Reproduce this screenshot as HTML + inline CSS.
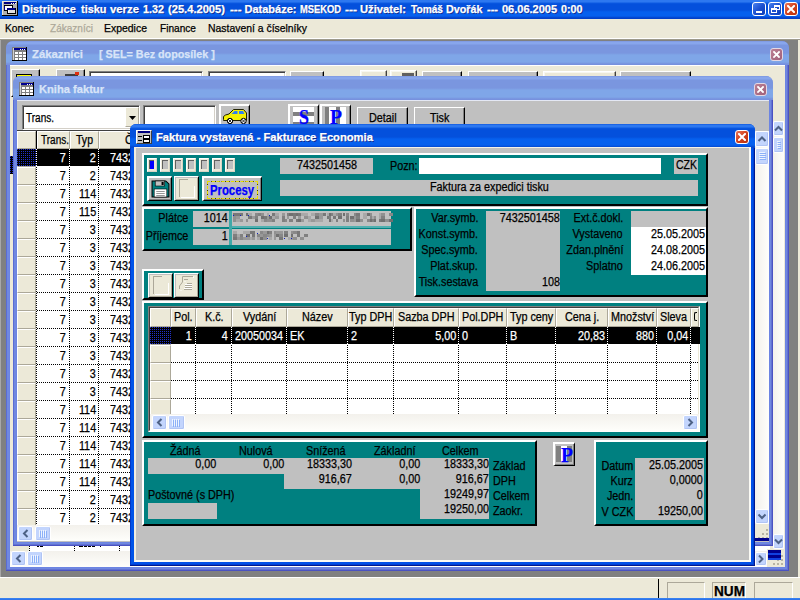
<!DOCTYPE html><html><head><meta charset="utf-8"><title>Distribuce tisku</title><style>
html,body{margin:0;padding:0;background:#808080;}
body{width:800px;height:600px;overflow:hidden;position:relative;font-family:"Liberation Sans",sans-serif;font-size:12px;color:#000;}
div,span,svg{position:absolute;box-sizing:border-box;}
span{white-space:nowrap;-webkit-text-stroke:0.25px currentColor;}
.panel{background:#008080;border-top:2px solid #fff;border-left:2px solid #fff;border-right:2px solid #000;border-bottom:2px solid #000;}
.btn{background:#ece9d8;border-top:1px solid #fff;border-left:1px solid #fff;border-right:1px solid #404040;border-bottom:1px solid #404040;box-shadow:inset -1px -1px 0 #aca899, inset 1px 1px 0 #f8f7f0;}
.gbtn{background:#c0c0c0;border-top:2px solid #fff;border-left:2px solid #fff;border-right:1px solid #000;border-bottom:1px solid #000;box-shadow:inset -1px -1px 0 #808080;}
.gbtn1{background:#c0c0c0;border-top:1px solid #fff;border-left:1px solid #fff;border-right:1px solid #000;border-bottom:1px solid #000;box-shadow:inset -1px -1px 0 #808080;}
.pbtn{background:#ece9d8;border-top:1px solid #fff;border-left:1px solid #fff;border-right:1px solid #000;border-bottom:1px solid #000;box-shadow:inset 1px 1px 0 #c0c0c0,inset -1px -1px 0 #aca899;}
.hd{background:#ece9d8;border-top:1px solid #fff;border-left:1px solid #fff;border-right:1px solid #aca899;border-bottom:1px solid #aca899;}
.sb{background:#c3d5fd;border:1px solid #fff;border-radius:2px;box-shadow:inset -1px -1px 0 #b0c4f4;}
.cb{border:1px solid #fff;border-radius:3px;}
.cbi{border:1px solid #e4d8e4;border-radius:3px;}
.sunk{background:#fff;border:1px solid #808080;border-right-color:#fff;border-bottom-color:#fff;box-shadow:inset 1px 1px 0 #404040,inset -1px -1px 0 #d4d0c8;}
</style></head><body>
<div style="left:0px;top:0px;width:800px;height:19px;background:linear-gradient(to bottom,#2d78f0 0,#2d78f0 2px,#0c5ae2 3px,#0450dc 4px,#0450dc 10px,#0660ee 12px,#0660ee 16px,#0340c8 18px,#0340c8 19px);"></div>
<svg style="left:2px;top:1px" width="16" height="15" viewBox="0 0 16 15" shape-rendering="crispEdges"><rect width="16" height="15" fill="#000"/><rect width="15" height="14" fill="#e8e4d8"/><rect x="1" y="1" width="14" height="13" fill="#b0b0b0"/><rect x="2" y="1" width="12" height="2" fill="#000080"/><rect x="9" y="2" width="1" height="1" fill="#fff"/><rect x="11" y="2" width="1" height="1" fill="#fff"/><rect x="13" y="2" width="1" height="1" fill="#fff"/><rect x="2" y="4" width="9" height="6" fill="#000"/><rect x="2" y="5" width="1" height="4" fill="#000080"/><rect x="3" y="5" width="7" height="4" fill="#fff"/><rect x="5" y="7" width="9" height="6" fill="#000"/><rect x="5" y="7" width="8" height="2" fill="#000080"/><rect x="6" y="9" width="7" height="3" fill="#e0e0e0"/><rect x="6" y="9" width="1" height="3" fill="#fff"/></svg>
<span style="top:3px;font-size:11px;line-height:13px;font-weight:bold;color:#fff;left:22px;transform-origin:0 0;text-shadow:1px 1px 0 #0a2a90;">Distribuce</span>
<span style="top:3px;font-size:11px;line-height:13px;font-weight:bold;color:#fff;left:80.5px;transform-origin:0 0;transform:scaleX(0.9927);text-shadow:1px 1px 0 #0a2a90;">tisku</span>
<span style="top:3px;font-size:11px;line-height:13px;font-weight:bold;color:#fff;left:110px;transform-origin:0 0;transform:scaleX(1.0300);text-shadow:1px 1px 0 #0a2a90;">verze</span>
<span style="top:3px;font-size:11px;line-height:13px;font-weight:bold;color:#fff;left:143px;transform-origin:0 0;transform:scaleX(0.9796);text-shadow:1px 1px 0 #0a2a90;">1.32</span>
<span style="top:3px;font-size:11px;line-height:13px;font-weight:bold;color:#fff;left:168px;transform-origin:0 0;transform:scaleX(1.0122);text-shadow:1px 1px 0 #0a2a90;">(25.4.2005)</span>
<span style="top:3px;font-size:11px;line-height:13px;font-weight:bold;color:#fff;left:229.5px;transform-origin:0 0;transform:scaleX(1.0484);text-shadow:1px 1px 0 #0a2a90;">---</span>
<span style="top:3px;font-size:11px;line-height:13px;font-weight:bold;color:#fff;left:244.5px;transform-origin:0 0;text-shadow:1px 1px 0 #0a2a90;">Databáze:</span>
<span style="top:3px;font-size:11px;line-height:13px;font-weight:bold;color:#fff;left:300px;transform-origin:0 0;transform:scaleX(0.8492);text-shadow:1px 1px 0 #0a2a90;">MSEKOD</span>
<span style="top:3px;font-size:11px;line-height:13px;font-weight:bold;color:#fff;left:345px;transform-origin:0 0;transform:scaleX(1.0940);text-shadow:1px 1px 0 #0a2a90;">---</span>
<span style="top:3px;font-size:11px;line-height:13px;font-weight:bold;color:#fff;left:360px;transform-origin:0 0;transform:scaleX(1.0166);text-shadow:1px 1px 0 #0a2a90;">Uživatel:</span>
<span style="top:3px;font-size:11px;line-height:13px;font-weight:bold;color:#fff;left:410.5px;transform-origin:0 0;transform:scaleX(0.9234);text-shadow:1px 1px 0 #0a2a90;">Tomáš</span>
<span style="top:3px;font-size:11px;line-height:13px;font-weight:bold;color:#fff;left:446px;transform-origin:0 0;transform:scaleX(0.9782);text-shadow:1px 1px 0 #0a2a90;">Dvořák</span>
<span style="top:3px;font-size:11px;line-height:13px;font-weight:bold;color:#fff;left:487px;transform-origin:0 0;text-shadow:1px 1px 0 #0a2a90;">---</span>
<span style="top:3px;font-size:11px;line-height:13px;font-weight:bold;color:#fff;left:502px;transform-origin:0 0;text-shadow:1px 1px 0 #0a2a90;">06.06.2005</span>
<span style="top:3px;font-size:11px;line-height:13px;font-weight:bold;color:#fff;left:561px;transform-origin:0 0;transform:scaleX(0.9759);text-shadow:1px 1px 0 #0a2a90;">0:00</span>
<div class="cb" style="left:752px;top:2px;width:14px;height:14px;background:linear-gradient(135deg,#4a83f0,#1c50d0 50%,#0a3cb8);"></div>
<div class="cb" style="left:768px;top:2px;width:14px;height:14px;background:linear-gradient(135deg,#4a83f0,#1c50d0 50%,#0a3cb8);"></div>
<div class="cb" style="left:784px;top:2px;width:14px;height:14px;background:linear-gradient(135deg,#e8765a,#d2401c 50%,#b8300e);"></div>
<div style="left:756px;top:11px;width:6px;height:2px;background:#fff;"></div>
<div style="left:774px;top:5px;width:6px;height:5px;border:1px solid #fff;border-top-width:2px;"></div>
<div style="left:771px;top:8px;width:6px;height:5px;border:1px solid #fff;border-top-width:2px;background:#1c50d0;"></div>
<svg style="left:787px;top:5px" width="8" height="8" viewBox="0 0 8 8"><path d="M1 1L7 7M7 1L1 7" stroke="#fff" stroke-width="2" stroke-linecap="square"/></svg>
<div style="left:0px;top:19px;width:800px;height:19px;background:#ece9d8;"></div>
<span style="top:22px;font-size:11px;line-height:13px;left:5px;transform-origin:0 0;transform:scaleX(0.9289);">Konec</span>
<span style="top:22px;font-size:11px;line-height:13px;color:#aca899;left:50px;transform-origin:0 0;transform:scaleX(0.9131);">Zákazníci</span>
<span style="top:22px;font-size:11px;line-height:13px;left:104px;transform-origin:0 0;transform:scaleX(0.9496);">Expedice</span>
<span style="top:22px;font-size:11px;line-height:13px;left:160px;transform-origin:0 0;transform:scaleX(0.9194);">Finance</span>
<span style="top:22px;font-size:11px;line-height:13px;left:208px;transform-origin:0 0;transform:scaleX(0.9462);">Nastavení a číselníky</span>
<div style="left:0px;top:38px;width:800px;height:1px;background:#fff;"></div>
<div style="left:0px;top:39px;width:800px;height:1px;background:#9d9a8c;"></div>
<div style="left:0px;top:40px;width:800px;height:537px;background:#808080;"></div>
<div style="left:0px;top:40px;width:1px;height:537px;background:#a8a8a8;"></div>
<div style="left:798px;top:40px;width:2px;height:537px;background:#ece9d8;"></div>
<div style="left:0px;top:577px;width:800px;height:1px;background:#fff;"></div>
<div style="left:0px;top:578px;width:800px;height:22px;background:#ece9d8;"></div>
<div style="left:658px;top:579px;width:1px;height:19px;background:#000;"></div>
<div style="left:667px;top:582px;width:38px;height:17px;border:1px solid #aca899;border-right-color:#fff;border-bottom-color:#fff;"></div>
<div style="left:712px;top:582px;width:34px;height:17px;border:1px solid #aca899;border-right-color:#fff;border-bottom-color:#fff;"></div>
<div style="left:754px;top:582px;width:39px;height:17px;border:1px solid #aca899;border-right-color:#fff;border-bottom-color:#fff;"></div>
<span style="top:584px;font-size:14px;line-height:15px;font-weight:bold;left:714px;transform-origin:0 0;transform:scaleX(0.9725);">NUM</span>
<div style="left:0px;top:598px;width:800px;height:2px;background:linear-gradient(to bottom,#3a86f2,#2a6ee8);"></div>
<div style="left:6px;top:41px;width:783px;height:530px;background:#7088e0;border-radius:7px 7px 0 0;"></div>
<div style="left:785px;top:49px;width:1px;height:519px;background:#6c84e2;"></div>
<div style="left:6px;top:49px;width:1px;height:522px;background:#5a6cd2;"></div>
<div style="left:786px;top:49px;width:1px;height:520px;background:#7088e0;"></div>
<div style="left:7px;top:49px;width:1px;height:521px;background:#7088e0;"></div>
<div style="left:787px;top:49px;width:1px;height:521px;background:#6272d2;"></div>
<div style="left:8px;top:49px;width:1px;height:520px;background:#7088e0;"></div>
<div style="left:788px;top:49px;width:1px;height:522px;background:#4a52c2;"></div>
<div style="left:9px;top:49px;width:1px;height:519px;background:#6c84e2;"></div>
<div style="left:9px;top:567px;width:777px;height:1px;background:#6c84e2;"></div>
<div style="left:8px;top:568px;width:779px;height:1px;background:#7088e0;"></div>
<div style="left:7px;top:569px;width:781px;height:1px;background:#6272d2;"></div>
<div style="left:6px;top:570px;width:783px;height:1px;background:#4a52c2;"></div>
<div style="left:6px;top:41px;width:783px;height:24px;background:linear-gradient(to bottom,#7a92dc 0,#88a6ec 1px,#88a6ec 3px,#7a96df 4px,#7a96df 12px,#7fa6e8 14px,#7fa6e8 21px,#7791de 23px);border-radius:7px 7px 0 0;"></div>
<div style="left:10px;top:65px;width:775px;height:502px;background:#ece9d8;border-top:1px solid #fff;"></div>
<svg style="left:12px;top:47px" width="15" height="14" viewBox="0 0 15 14" shape-rendering="crispEdges"><rect width="15" height="14" fill="#000"/><rect width="14" height="13" fill="#808080"/><rect x="1" y="1" width="1" height="12" fill="#d0d0d0"/><rect x="2" y="1" width="12" height="2" fill="#000090"/><rect x="8" y="2" width="1" height="1" fill="#fff"/><rect x="10" y="2" width="1" height="1" fill="#fff"/><rect x="12" y="2" width="1" height="1" fill="#fff"/><rect x="3" y="5" width="3" height="2" fill="#fff"/><rect x="3" y="8" width="3" height="2" fill="#fff"/><rect x="3" y="11" width="3" height="2" fill="#fff"/><rect x="7" y="5" width="3" height="2" fill="#fff"/><rect x="7" y="8" width="3" height="2" fill="#fff"/><rect x="7" y="11" width="3" height="2" fill="#fff"/><rect x="11" y="5" width="3" height="2" fill="#fff"/><rect x="11" y="8" width="3" height="2" fill="#fff"/><rect x="11" y="11" width="3" height="2" fill="#fff"/></svg>
<span style="top:48px;font-size:11px;line-height:13px;font-weight:bold;color:#d8e4f8;left:32px;transform-origin:0 0;transform:scaleX(1.0290);">Zákazníci</span>
<span style="top:48px;font-size:11px;line-height:13px;font-weight:bold;color:#d8e4f8;left:99px;transform-origin:0 0;transform:scaleX(0.9803);">[ SEL= Bez doposílek ]</span>
<div class="cbi" style="left:770px;top:48px;width:13px;height:13px;background:linear-gradient(135deg,#bc8094,#a0607a);"></div>
<svg style="left:773px;top:51px" width="7" height="7" viewBox="0 0 7 7"><path d="M1 1L6 6M6 1L1 6" stroke="#fff" stroke-width="1.8" stroke-linecap="square"/></svg>
<div class="gbtn1" style="left:11px;top:69px;width:29px;height:28px;"></div>
<div style="left:16px;top:74px;width:16px;height:10px;background:#ffff00;border:1px solid #000;"></div>
<div class="gbtn1" style="left:56px;top:69px;width:29px;height:28px;"></div>
<div style="left:65px;top:74px;width:13px;height:8px;background:#404040;"></div>
<div style="left:75px;top:72px;width:4px;height:3px;background:#e03010;"></div>
<div class="sunk" style="left:89px;top:71px;width:114px;height:20px;"></div>
<div class="sunk" style="left:208px;top:71px;width:78px;height:20px;"></div>
<div class="gbtn1" style="left:290px;top:71px;width:34px;height:20px;"></div>
<div class="btn" style="left:360px;top:70px;width:27px;height:20px;"></div>
<div class="btn" style="left:390px;top:70px;width:27px;height:20px;"></div>
<div style="left:402px;top:73px;width:12px;height:6px;background:#606060;"></div>
<div class="gbtn1" style="left:422px;top:71px;width:40px;height:20px;"></div>
<div class="gbtn1" style="left:468px;top:71px;width:70px;height:20px;"></div>
<div class="btn" style="left:543px;top:71px;width:73px;height:20px;"></div>
<span style="top:75px;font-size:12px;line-height:13px;left:556px;transform-origin:0 0;transform:scaleX(0.9000);">Faktury</span>
<div class="gbtn1" style="left:620px;top:71px;width:71px;height:20px;"></div>
<div style="left:773px;top:121px;width:11px;height:428px;background:linear-gradient(to right,#f3f1ec,#fefefb);"></div>
<div style="left:10px;top:551px;width:758px;height:16px;background:linear-gradient(to bottom,#f3f1ec,#fefefb);"></div>
<div style="left:10px;top:546px;width:760px;height:5px;background:#fff;"></div>
<div class="sb" style="left:773px;top:121px;width:11px;height:15px;"></div>
<svg style="left:773px;top:121px" width="11" height="15" viewBox="-5.5 -7.5 11 15"><path d="M-3.5 2L0 -1.5L3.5 2" stroke="#4d6185" stroke-width="2" fill="none"/></svg>
<div class="sb" style="left:773px;top:137px;width:11px;height:16px;"></div>
<div style="left:777px;top:141px;width:3px;height:1px;background:#eef4fe;"></div>
<div style="left:778px;top:142px;width:3px;height:1px;background:#8cb0f8;"></div>
<div style="left:777px;top:143px;width:3px;height:1px;background:#eef4fe;"></div>
<div style="left:778px;top:144px;width:3px;height:1px;background:#8cb0f8;"></div>
<div style="left:777px;top:145px;width:3px;height:1px;background:#eef4fe;"></div>
<div style="left:778px;top:146px;width:3px;height:1px;background:#8cb0f8;"></div>
<div style="left:777px;top:147px;width:3px;height:1px;background:#eef4fe;"></div>
<div style="left:778px;top:148px;width:3px;height:1px;background:#8cb0f8;"></div>
<div class="sb" style="left:773px;top:534px;width:11px;height:15px;"></div>
<svg style="left:773px;top:534px" width="11" height="15" viewBox="-5.5 -7.5 11 15"><path d="M-3.5 -2L0 1.5L3.5 -2" stroke="#4d6185" stroke-width="2" fill="none"/></svg>
<div class="sb" style="left:11px;top:551px;width:15px;height:15px;"></div>
<svg style="left:11px;top:551px" width="15" height="15" viewBox="-7.5 -7.5 15 15"><path d="M2 -3.5L-1.5 0L2 3.5" stroke="#4d6185" stroke-width="2" fill="none"/></svg>
<div class="sb" style="left:27px;top:551px;width:16px;height:15px;"></div>
<div style="left:31px;top:555px;width:1px;height:7px;background:#eef4fe;"></div>
<div style="left:32px;top:556px;width:1px;height:7px;background:#8cb0f8;"></div>
<div style="left:33px;top:555px;width:1px;height:7px;background:#eef4fe;"></div>
<div style="left:34px;top:556px;width:1px;height:7px;background:#8cb0f8;"></div>
<div style="left:35px;top:555px;width:1px;height:7px;background:#eef4fe;"></div>
<div style="left:36px;top:556px;width:1px;height:7px;background:#8cb0f8;"></div>
<div style="left:37px;top:555px;width:1px;height:7px;background:#eef4fe;"></div>
<div style="left:38px;top:556px;width:1px;height:7px;background:#8cb0f8;"></div>
<div class="sb" style="left:755px;top:552px;width:12px;height:14px;"></div>
<svg style="left:755px;top:552px" width="12" height="14" viewBox="-6.0 -7.0 12 14"><path d="M-2 -3.5L1.5 0L-2 3.5" stroke="#4d6185" stroke-width="2" fill="none"/></svg>
<div style="left:767px;top:549px;width:18px;height:18px;background:#ece9d8;"></div>
<div style="left:781px;top:555px;width:2px;height:2px;background:#b8b4a4;"></div>
<div style="left:777px;top:559px;width:2px;height:2px;background:#b8b4a4;"></div>
<div style="left:781px;top:559px;width:2px;height:2px;background:#b8b4a4;"></div>
<div style="left:773px;top:563px;width:2px;height:2px;background:#b8b4a4;"></div>
<div style="left:777px;top:563px;width:2px;height:2px;background:#b8b4a4;"></div>
<div style="left:781px;top:563px;width:2px;height:2px;background:#b8b4a4;"></div>
<div style="left:768px;top:550px;width:13px;height:10px;background:repeating-linear-gradient(to bottom,#00008c 0,#00008c 3px,#1040e0 3px,#1040e0 5px);"></div>
<div style="left:10px;top:156px;width:3px;height:18px;background-color:#2030c8;background-image:linear-gradient(to right,transparent 1px,#000 1px),linear-gradient(to bottom,transparent 1px,#000 1px);background-size:2px 2px,2px 2px;"></div>
<div style="left:10px;top:546px;width:19px;height:5px;background:#ece9d8;"></div>
<div style="left:29px;top:546px;width:1px;height:5px;background-image:linear-gradient(to bottom,#000 1px,transparent 1px);background-size:1px 2px;"></div>
<div style="left:74px;top:546px;width:1px;height:5px;background-image:linear-gradient(to bottom,#000 1px,transparent 1px);background-size:1px 2px;"></div>
<div style="left:119px;top:546px;width:1px;height:5px;background-image:linear-gradient(to bottom,#000 1px,transparent 1px);background-size:1px 2px;"></div>
<div style="left:37px;top:546px;width:2px;height:1px;background:#000;"></div>
<div style="left:40px;top:546px;width:3px;height:1px;background:#000;"></div>
<div style="left:79px;top:546px;width:4px;height:1px;background:#000;"></div>
<div style="left:84px;top:546px;width:3px;height:1px;background:#000;"></div>
<div style="left:88px;top:546px;width:3px;height:1px;background:#000;"></div>
<div style="left:92px;top:546px;width:3px;height:1px;background:#000;"></div>
<div style="left:100px;top:546px;width:1px;height:1px;background:#000;"></div>
<div style="left:13px;top:76px;width:760px;height:470px;background:#7088e0;border-radius:7px 7px 0 0;"></div>
<div style="left:769px;top:84px;width:1px;height:459px;background:#6c84e2;"></div>
<div style="left:13px;top:84px;width:1px;height:462px;background:#5a6cd2;"></div>
<div style="left:770px;top:84px;width:1px;height:460px;background:#7088e0;"></div>
<div style="left:14px;top:84px;width:1px;height:461px;background:#7088e0;"></div>
<div style="left:771px;top:84px;width:1px;height:461px;background:#6272d2;"></div>
<div style="left:15px;top:84px;width:1px;height:460px;background:#7088e0;"></div>
<div style="left:772px;top:84px;width:1px;height:462px;background:#4a52c2;"></div>
<div style="left:16px;top:84px;width:1px;height:459px;background:#6c84e2;"></div>
<div style="left:16px;top:542px;width:754px;height:1px;background:#6c84e2;"></div>
<div style="left:15px;top:543px;width:756px;height:1px;background:#7088e0;"></div>
<div style="left:14px;top:544px;width:758px;height:1px;background:#6272d2;"></div>
<div style="left:13px;top:545px;width:760px;height:1px;background:#4a52c2;"></div>
<div style="left:13px;top:76px;width:760px;height:24px;background:linear-gradient(to bottom,#7a92dc 0,#88a6ec 1px,#88a6ec 3px,#7a96df 4px,#7a96df 12px,#7fa6e8 14px,#7fa6e8 21px,#7791de 23px);border-radius:7px 7px 0 0;"></div>
<div style="left:17px;top:100px;width:752px;height:442px;background:#c0c0c0;border-top:1px solid #e4e8f4;"></div>
<svg style="left:19px;top:82px" width="15" height="14" viewBox="0 0 15 14" shape-rendering="crispEdges"><rect width="15" height="14" fill="#000"/><rect width="14" height="13" fill="#808080"/><rect x="1" y="1" width="1" height="12" fill="#d0d0d0"/><rect x="2" y="1" width="12" height="2" fill="#000090"/><rect x="8" y="2" width="1" height="1" fill="#fff"/><rect x="10" y="2" width="1" height="1" fill="#fff"/><rect x="12" y="2" width="1" height="1" fill="#fff"/><rect x="3" y="5" width="3" height="2" fill="#fff"/><rect x="3" y="8" width="3" height="2" fill="#fff"/><rect x="3" y="11" width="3" height="2" fill="#fff"/><rect x="7" y="5" width="3" height="2" fill="#fff"/><rect x="7" y="8" width="3" height="2" fill="#fff"/><rect x="7" y="11" width="3" height="2" fill="#fff"/><rect x="11" y="5" width="3" height="2" fill="#fff"/><rect x="11" y="8" width="3" height="2" fill="#fff"/><rect x="11" y="11" width="3" height="2" fill="#fff"/></svg>
<span style="top:83px;font-size:11px;line-height:13px;font-weight:bold;color:#d8e4f8;left:39px;transform-origin:0 0;transform:scaleX(1.0127);">Kniha faktur</span>
<div class="cbi" style="left:754px;top:83px;width:13px;height:13px;background:linear-gradient(135deg,#bc8094,#a0607a);"></div>
<svg style="left:757px;top:86px" width="7" height="7" viewBox="0 0 7 7"><path d="M1 1L6 6M6 1L1 6" stroke="#fff" stroke-width="1.8" stroke-linecap="square"/></svg>
<div class="sunk" style="left:22px;top:105px;width:118px;height:25px;"></div>
<span style="top:112px;font-size:12px;line-height:13px;left:26px;transform-origin:0 0;transform:scaleX(0.8343);">Trans.</span>
<div style="left:125px;top:107px;width:14px;height:20px;background:#ece9d8;border:1px solid #fff;border-right-color:#aca899;border-bottom-color:#aca899;"></div>
<svg style="left:129px;top:116px" width="8" height="5"><path d="M0 0H7L3.5 4Z" fill="#000"/></svg>
<div class="sunk" style="left:143px;top:105px;width:73px;height:25px;"></div>
<div class="gbtn" style="left:219px;top:104px;width:31px;height:26px;"></div>
<svg style="left:222px;top:107px" width="27" height="18" viewBox="0 0 27 18"><path d="M1.500 12.500V9.500L3.500 8L7 7L11.500 2.500H21.500L24.500 6V13.500H1.500Z" fill="#f4f000" stroke="#202000" stroke-width="1"/><path d="M9.500 7L12.500 4H15.500V7Z M17 4H21L22.500 7H17Z" fill="#3080f0"/><circle cx="8" cy="14" r="2.700" fill="#fff" stroke="#000"/><circle cx="21.500" cy="14" r="2.700" fill="#fff" stroke="#000"/><path d="M6 12L10 16M10 12L6 16M19.500 12L23.500 16M23.500 12L19.500 16" stroke="#000" stroke-width="0.8"/></svg>
<div class="gbtn" style="left:288px;top:104px;width:31px;height:26px;"></div>
<div class="gbtn" style="left:320px;top:104px;width:31px;height:26px;"></div>
<div style="left:293px;top:107px;width:21px;height:17px;background:#fff;"></div>
<div style="left:293px;top:112px;width:21px;height:4px;background:#808080;"></div>
<div style="left:293px;top:122px;width:21px;height:3px;background:#808080;"></div>
<span style="top:106px;font-size:21px;line-height:22px;font-family:'Liberation Serif',serif;font-weight:bold;color:#0000ff;left:299px;transform-origin:0 0;transform:scaleX(0.8568);">S</span>
<div style="left:325px;top:107px;width:21px;height:17px;background:#fff;"></div>
<div style="left:325px;top:107px;width:4px;height:17px;background:#808080;"></div>
<div style="left:336px;top:107px;width:4px;height:17px;background:#808080;"></div>
<span style="top:106px;font-size:21px;line-height:22px;font-family:'Liberation Serif',serif;font-weight:bold;color:#0000ff;left:330px;transform-origin:0 0;transform:scaleX(0.9354);">P</span>
<div class="gbtn1" style="left:357px;top:107px;width:51px;height:24px;"></div>
<span style="top:112px;font-size:12px;line-height:13px;left:369px;transform-origin:0 0;transform:scaleX(0.9000);">Detail</span>
<div class="gbtn1" style="left:414px;top:107px;width:51px;height:24px;"></div>
<span style="top:112px;font-size:12px;line-height:13px;left:430px;transform-origin:0 0;transform:scaleX(0.9000);">Tisk</span>
<div style="left:17px;top:130px;width:738px;height:395px;background:#fff;"></div>
<div style="left:17px;top:130px;width:738px;height:1px;background:#404040;"></div>
<div class="hd" style="left:17px;top:131px;width:19px;height:18px;"></div>
<div class="hd" style="left:37px;top:131px;width:33px;height:18px;"></div>
<span style="top:134px;font-size:12px;line-height:13px;left:41px;transform-origin:0 0;transform:scaleX(0.8343);">Trans.</span>
<div class="hd" style="left:70px;top:131px;width:29px;height:18px;"></div>
<span style="top:134px;font-size:12px;line-height:13px;left:76px;transform-origin:0 0;transform:scaleX(0.8788);">Typ</span>
<div class="hd" style="left:99px;top:131px;width:60px;height:18px;"></div>
<div style="left:36px;top:131px;width:1px;height:18px;background:#000;"></div>
<span style="top:134px;font-size:12px;line-height:13px;left:125px;transform-origin:0 0;transform:scaleX(0.9000);">Č</span>
<div class="hd" style="left:17px;top:149px;width:19px;height:18px;"></div>
<div class="hd" style="left:17px;top:167px;width:19px;height:18px;"></div>
<div class="hd" style="left:17px;top:185px;width:19px;height:18px;"></div>
<div class="hd" style="left:17px;top:203px;width:19px;height:18px;"></div>
<div class="hd" style="left:17px;top:221px;width:19px;height:18px;"></div>
<div class="hd" style="left:17px;top:239px;width:19px;height:18px;"></div>
<div class="hd" style="left:17px;top:257px;width:19px;height:18px;"></div>
<div class="hd" style="left:17px;top:275px;width:19px;height:18px;"></div>
<div class="hd" style="left:17px;top:293px;width:19px;height:18px;"></div>
<div class="hd" style="left:17px;top:311px;width:19px;height:18px;"></div>
<div class="hd" style="left:17px;top:329px;width:19px;height:18px;"></div>
<div class="hd" style="left:17px;top:347px;width:19px;height:18px;"></div>
<div class="hd" style="left:17px;top:365px;width:19px;height:18px;"></div>
<div class="hd" style="left:17px;top:383px;width:19px;height:18px;"></div>
<div class="hd" style="left:17px;top:401px;width:19px;height:18px;"></div>
<div class="hd" style="left:17px;top:419px;width:19px;height:18px;"></div>
<div class="hd" style="left:17px;top:437px;width:19px;height:18px;"></div>
<div class="hd" style="left:17px;top:455px;width:19px;height:18px;"></div>
<div class="hd" style="left:17px;top:473px;width:19px;height:18px;"></div>
<div class="hd" style="left:17px;top:491px;width:19px;height:18px;"></div>
<div class="hd" style="left:17px;top:509px;width:19px;height:18px;"></div>
<div style="left:17px;top:149px;width:19px;height:17px;background-color:#2030c8;background-image:linear-gradient(to right,transparent 1px,#000 1px),linear-gradient(to bottom,transparent 1px,#000 1px);background-size:2px 2px,2px 2px;"></div>
<div style="left:37px;top:149px;width:100px;height:17px;background:#000;"></div>
<span style="top:152px;font-size:12px;line-height:13px;color:#fff;right:734px;transform-origin:100% 0;transform:scaleX(0.9000);">7</span>
<span style="top:152px;font-size:12px;line-height:13px;color:#fff;right:704px;transform-origin:100% 0;transform:scaleX(0.9000);">2</span>
<span style="top:152px;font-size:12px;line-height:13px;color:#fff;left:110px;transform-origin:0 0;transform:scaleX(0.9000);">7432501</span>
<div style="left:37px;top:166px;width:100px;height:1px;background-image:linear-gradient(to right,#fff 1px,transparent 1px);background-size:2px 1px;"></div>
<span style="top:170px;font-size:12px;line-height:13px;right:734px;transform-origin:100% 0;transform:scaleX(0.9000);">7</span>
<span style="top:170px;font-size:12px;line-height:13px;right:704px;transform-origin:100% 0;transform:scaleX(0.9000);">2</span>
<span style="top:170px;font-size:12px;line-height:13px;left:110px;transform-origin:0 0;transform:scaleX(0.9000);">7432501</span>
<div style="left:37px;top:184px;width:100px;height:1px;background-image:linear-gradient(to right,#000 1px,transparent 1px);background-size:2px 1px;"></div>
<span style="top:188px;font-size:12px;line-height:13px;right:734px;transform-origin:100% 0;transform:scaleX(0.9000);">7</span>
<span style="top:188px;font-size:12px;line-height:13px;right:704px;transform-origin:100% 0;transform:scaleX(0.9000);">114</span>
<span style="top:188px;font-size:12px;line-height:13px;left:110px;transform-origin:0 0;transform:scaleX(0.9000);">7432501</span>
<div style="left:37px;top:202px;width:100px;height:1px;background-image:linear-gradient(to right,#000 1px,transparent 1px);background-size:2px 1px;"></div>
<span style="top:206px;font-size:12px;line-height:13px;right:734px;transform-origin:100% 0;transform:scaleX(0.9000);">7</span>
<span style="top:206px;font-size:12px;line-height:13px;right:704px;transform-origin:100% 0;transform:scaleX(0.9000);">115</span>
<span style="top:206px;font-size:12px;line-height:13px;left:110px;transform-origin:0 0;transform:scaleX(0.9000);">7432501</span>
<div style="left:37px;top:220px;width:100px;height:1px;background-image:linear-gradient(to right,#000 1px,transparent 1px);background-size:2px 1px;"></div>
<span style="top:224px;font-size:12px;line-height:13px;right:734px;transform-origin:100% 0;transform:scaleX(0.9000);">7</span>
<span style="top:224px;font-size:12px;line-height:13px;right:704px;transform-origin:100% 0;transform:scaleX(0.9000);">3</span>
<span style="top:224px;font-size:12px;line-height:13px;left:110px;transform-origin:0 0;transform:scaleX(0.9000);">7432501</span>
<div style="left:37px;top:238px;width:100px;height:1px;background-image:linear-gradient(to right,#000 1px,transparent 1px);background-size:2px 1px;"></div>
<span style="top:242px;font-size:12px;line-height:13px;right:734px;transform-origin:100% 0;transform:scaleX(0.9000);">7</span>
<span style="top:242px;font-size:12px;line-height:13px;right:704px;transform-origin:100% 0;transform:scaleX(0.9000);">3</span>
<span style="top:242px;font-size:12px;line-height:13px;left:110px;transform-origin:0 0;transform:scaleX(0.9000);">7432501</span>
<div style="left:37px;top:256px;width:100px;height:1px;background-image:linear-gradient(to right,#000 1px,transparent 1px);background-size:2px 1px;"></div>
<span style="top:260px;font-size:12px;line-height:13px;right:734px;transform-origin:100% 0;transform:scaleX(0.9000);">7</span>
<span style="top:260px;font-size:12px;line-height:13px;right:704px;transform-origin:100% 0;transform:scaleX(0.9000);">3</span>
<span style="top:260px;font-size:12px;line-height:13px;left:110px;transform-origin:0 0;transform:scaleX(0.9000);">7432501</span>
<div style="left:37px;top:274px;width:100px;height:1px;background-image:linear-gradient(to right,#000 1px,transparent 1px);background-size:2px 1px;"></div>
<span style="top:278px;font-size:12px;line-height:13px;right:734px;transform-origin:100% 0;transform:scaleX(0.9000);">7</span>
<span style="top:278px;font-size:12px;line-height:13px;right:704px;transform-origin:100% 0;transform:scaleX(0.9000);">3</span>
<span style="top:278px;font-size:12px;line-height:13px;left:110px;transform-origin:0 0;transform:scaleX(0.9000);">7432501</span>
<div style="left:37px;top:292px;width:100px;height:1px;background-image:linear-gradient(to right,#000 1px,transparent 1px);background-size:2px 1px;"></div>
<span style="top:296px;font-size:12px;line-height:13px;right:734px;transform-origin:100% 0;transform:scaleX(0.9000);">7</span>
<span style="top:296px;font-size:12px;line-height:13px;right:704px;transform-origin:100% 0;transform:scaleX(0.9000);">3</span>
<span style="top:296px;font-size:12px;line-height:13px;left:110px;transform-origin:0 0;transform:scaleX(0.9000);">7432501</span>
<div style="left:37px;top:310px;width:100px;height:1px;background-image:linear-gradient(to right,#000 1px,transparent 1px);background-size:2px 1px;"></div>
<span style="top:314px;font-size:12px;line-height:13px;right:734px;transform-origin:100% 0;transform:scaleX(0.9000);">7</span>
<span style="top:314px;font-size:12px;line-height:13px;right:704px;transform-origin:100% 0;transform:scaleX(0.9000);">3</span>
<span style="top:314px;font-size:12px;line-height:13px;left:110px;transform-origin:0 0;transform:scaleX(0.9000);">7432501</span>
<div style="left:37px;top:328px;width:100px;height:1px;background-image:linear-gradient(to right,#000 1px,transparent 1px);background-size:2px 1px;"></div>
<span style="top:332px;font-size:12px;line-height:13px;right:734px;transform-origin:100% 0;transform:scaleX(0.9000);">7</span>
<span style="top:332px;font-size:12px;line-height:13px;right:704px;transform-origin:100% 0;transform:scaleX(0.9000);">3</span>
<span style="top:332px;font-size:12px;line-height:13px;left:110px;transform-origin:0 0;transform:scaleX(0.9000);">7432501</span>
<div style="left:37px;top:346px;width:100px;height:1px;background-image:linear-gradient(to right,#000 1px,transparent 1px);background-size:2px 1px;"></div>
<span style="top:350px;font-size:12px;line-height:13px;right:734px;transform-origin:100% 0;transform:scaleX(0.9000);">7</span>
<span style="top:350px;font-size:12px;line-height:13px;right:704px;transform-origin:100% 0;transform:scaleX(0.9000);">3</span>
<span style="top:350px;font-size:12px;line-height:13px;left:110px;transform-origin:0 0;transform:scaleX(0.9000);">7432501</span>
<div style="left:37px;top:364px;width:100px;height:1px;background-image:linear-gradient(to right,#000 1px,transparent 1px);background-size:2px 1px;"></div>
<span style="top:368px;font-size:12px;line-height:13px;right:734px;transform-origin:100% 0;transform:scaleX(0.9000);">7</span>
<span style="top:368px;font-size:12px;line-height:13px;right:704px;transform-origin:100% 0;transform:scaleX(0.9000);">3</span>
<span style="top:368px;font-size:12px;line-height:13px;left:110px;transform-origin:0 0;transform:scaleX(0.9000);">7432501</span>
<div style="left:37px;top:382px;width:100px;height:1px;background-image:linear-gradient(to right,#000 1px,transparent 1px);background-size:2px 1px;"></div>
<span style="top:386px;font-size:12px;line-height:13px;right:734px;transform-origin:100% 0;transform:scaleX(0.9000);">7</span>
<span style="top:386px;font-size:12px;line-height:13px;right:704px;transform-origin:100% 0;transform:scaleX(0.9000);">3</span>
<span style="top:386px;font-size:12px;line-height:13px;left:110px;transform-origin:0 0;transform:scaleX(0.9000);">7432501</span>
<div style="left:37px;top:400px;width:100px;height:1px;background-image:linear-gradient(to right,#000 1px,transparent 1px);background-size:2px 1px;"></div>
<span style="top:404px;font-size:12px;line-height:13px;right:734px;transform-origin:100% 0;transform:scaleX(0.9000);">7</span>
<span style="top:404px;font-size:12px;line-height:13px;right:704px;transform-origin:100% 0;transform:scaleX(0.9000);">114</span>
<span style="top:404px;font-size:12px;line-height:13px;left:110px;transform-origin:0 0;transform:scaleX(0.9000);">7432501</span>
<div style="left:37px;top:418px;width:100px;height:1px;background-image:linear-gradient(to right,#000 1px,transparent 1px);background-size:2px 1px;"></div>
<span style="top:422px;font-size:12px;line-height:13px;right:734px;transform-origin:100% 0;transform:scaleX(0.9000);">7</span>
<span style="top:422px;font-size:12px;line-height:13px;right:704px;transform-origin:100% 0;transform:scaleX(0.9000);">114</span>
<span style="top:422px;font-size:12px;line-height:13px;left:110px;transform-origin:0 0;transform:scaleX(0.9000);">7432501</span>
<div style="left:37px;top:436px;width:100px;height:1px;background-image:linear-gradient(to right,#000 1px,transparent 1px);background-size:2px 1px;"></div>
<span style="top:440px;font-size:12px;line-height:13px;right:734px;transform-origin:100% 0;transform:scaleX(0.9000);">7</span>
<span style="top:440px;font-size:12px;line-height:13px;right:704px;transform-origin:100% 0;transform:scaleX(0.9000);">114</span>
<span style="top:440px;font-size:12px;line-height:13px;left:110px;transform-origin:0 0;transform:scaleX(0.9000);">7432501</span>
<div style="left:37px;top:454px;width:100px;height:1px;background-image:linear-gradient(to right,#000 1px,transparent 1px);background-size:2px 1px;"></div>
<span style="top:458px;font-size:12px;line-height:13px;right:734px;transform-origin:100% 0;transform:scaleX(0.9000);">7</span>
<span style="top:458px;font-size:12px;line-height:13px;right:704px;transform-origin:100% 0;transform:scaleX(0.9000);">114</span>
<span style="top:458px;font-size:12px;line-height:13px;left:110px;transform-origin:0 0;transform:scaleX(0.9000);">7432501</span>
<div style="left:37px;top:472px;width:100px;height:1px;background-image:linear-gradient(to right,#000 1px,transparent 1px);background-size:2px 1px;"></div>
<span style="top:476px;font-size:12px;line-height:13px;right:734px;transform-origin:100% 0;transform:scaleX(0.9000);">7</span>
<span style="top:476px;font-size:12px;line-height:13px;right:704px;transform-origin:100% 0;transform:scaleX(0.9000);">114</span>
<span style="top:476px;font-size:12px;line-height:13px;left:110px;transform-origin:0 0;transform:scaleX(0.9000);">7432501</span>
<div style="left:37px;top:490px;width:100px;height:1px;background-image:linear-gradient(to right,#000 1px,transparent 1px);background-size:2px 1px;"></div>
<span style="top:494px;font-size:12px;line-height:13px;right:734px;transform-origin:100% 0;transform:scaleX(0.9000);">7</span>
<span style="top:494px;font-size:12px;line-height:13px;right:704px;transform-origin:100% 0;transform:scaleX(0.9000);">2</span>
<span style="top:494px;font-size:12px;line-height:13px;left:110px;transform-origin:0 0;transform:scaleX(0.9000);">7432501</span>
<div style="left:37px;top:508px;width:100px;height:1px;background-image:linear-gradient(to right,#000 1px,transparent 1px);background-size:2px 1px;"></div>
<span style="top:512px;font-size:12px;line-height:13px;right:734px;transform-origin:100% 0;transform:scaleX(0.9000);">7</span>
<span style="top:512px;font-size:12px;line-height:13px;right:704px;transform-origin:100% 0;transform:scaleX(0.9000);">2</span>
<span style="top:512px;font-size:12px;line-height:13px;left:110px;transform-origin:0 0;transform:scaleX(0.9000);">7432501</span>
<div style="left:37px;top:526px;width:100px;height:1px;background-image:linear-gradient(to right,#000 1px,transparent 1px);background-size:2px 1px;"></div>
<div style="left:36px;top:149px;width:1px;height:376px;background-image:linear-gradient(to bottom,#000 1px,transparent 1px);background-size:1px 2px;"></div>
<div style="left:36px;top:149px;width:1px;height:17px;background-image:linear-gradient(to bottom,#fff 1px,#000 1px);background-size:1px 2px;"></div>
<div style="left:69px;top:149px;width:1px;height:376px;background-image:linear-gradient(to bottom,#000 1px,transparent 1px);background-size:1px 2px;"></div>
<div style="left:69px;top:149px;width:1px;height:17px;background-image:linear-gradient(to bottom,#fff 1px,#000 1px);background-size:1px 2px;"></div>
<div style="left:98px;top:149px;width:1px;height:376px;background-image:linear-gradient(to bottom,#000 1px,transparent 1px);background-size:1px 2px;"></div>
<div style="left:98px;top:149px;width:1px;height:17px;background-image:linear-gradient(to bottom,#fff 1px,#000 1px);background-size:1px 2px;"></div>
<div style="left:17px;top:525px;width:738px;height:16px;background:linear-gradient(to bottom,#f3f1ec,#fefefb);"></div>
<div style="left:755px;top:131px;width:14px;height:393px;background:linear-gradient(to right,#f3f1ec,#fefefb);"></div>
<div class="sb" style="left:18px;top:526px;width:15px;height:15px;"></div>
<svg style="left:18px;top:526px" width="15" height="15" viewBox="-7.5 -7.5 15 15"><path d="M2 -3.5L-1.5 0L2 3.5" stroke="#4d6185" stroke-width="2" fill="none"/></svg>
<div class="sb" style="left:35px;top:526px;width:16px;height:15px;"></div>
<div style="left:39px;top:530px;width:1px;height:7px;background:#eef4fe;"></div>
<div style="left:40px;top:531px;width:1px;height:7px;background:#8cb0f8;"></div>
<div style="left:41px;top:530px;width:1px;height:7px;background:#eef4fe;"></div>
<div style="left:42px;top:531px;width:1px;height:7px;background:#8cb0f8;"></div>
<div style="left:43px;top:530px;width:1px;height:7px;background:#eef4fe;"></div>
<div style="left:44px;top:531px;width:1px;height:7px;background:#8cb0f8;"></div>
<div style="left:45px;top:530px;width:1px;height:7px;background:#eef4fe;"></div>
<div style="left:46px;top:531px;width:1px;height:7px;background:#8cb0f8;"></div>
<div class="sb" style="left:755px;top:131px;width:14px;height:16px;"></div>
<svg style="left:755px;top:131px" width="14" height="16" viewBox="-7.0 -8.0 14 16"><path d="M-3.5 2L0 -1.5L3.5 2" stroke="#4d6185" stroke-width="2" fill="none"/></svg>
<div class="sb" style="left:755px;top:148px;width:14px;height:17px;"></div>
<div style="left:759px;top:152px;width:6px;height:1px;background:#eef4fe;"></div>
<div style="left:760px;top:153px;width:6px;height:1px;background:#8cb0f8;"></div>
<div style="left:759px;top:154px;width:6px;height:1px;background:#eef4fe;"></div>
<div style="left:760px;top:155px;width:6px;height:1px;background:#8cb0f8;"></div>
<div style="left:759px;top:156px;width:6px;height:1px;background:#eef4fe;"></div>
<div style="left:760px;top:157px;width:6px;height:1px;background:#8cb0f8;"></div>
<div style="left:759px;top:158px;width:6px;height:1px;background:#eef4fe;"></div>
<div style="left:760px;top:159px;width:6px;height:1px;background:#8cb0f8;"></div>
<div class="sb" style="left:755px;top:509px;width:14px;height:15px;"></div>
<svg style="left:755px;top:509px" width="14" height="15" viewBox="-7.0 -7.5 14 15"><path d="M-3.5 -2L0 1.5L3.5 -2" stroke="#4d6185" stroke-width="2" fill="none"/></svg>
<div style="left:755px;top:524px;width:14px;height:17px;background:#ece9d8;"></div>
<div style="left:766px;top:529px;width:2px;height:2px;background:#b8b4a4;"></div>
<div style="left:762px;top:533px;width:2px;height:2px;background:#b8b4a4;"></div>
<div style="left:766px;top:533px;width:2px;height:2px;background:#b8b4a4;"></div>
<div style="left:758px;top:537px;width:2px;height:2px;background:#b8b4a4;"></div>
<div style="left:762px;top:537px;width:2px;height:2px;background:#b8b4a4;"></div>
<div style="left:766px;top:537px;width:2px;height:2px;background:#b8b4a4;"></div>
<div style="left:755px;top:538px;width:14px;height:3px;background:#00008c;"></div>
<div style="left:130px;top:124px;width:625px;height:442px;background:#0050e8;border-radius:6px 6px 0 0;"></div>
<div style="left:751px;top:132px;width:1px;height:431px;background:#0050e8;"></div>
<div style="left:130px;top:132px;width:1px;height:434px;background:#0038c8;"></div>
<div style="left:752px;top:132px;width:1px;height:432px;background:#0050e8;"></div>
<div style="left:131px;top:132px;width:1px;height:433px;background:#0054e8;"></div>
<div style="left:753px;top:132px;width:1px;height:433px;background:#0040d0;"></div>
<div style="left:132px;top:132px;width:1px;height:432px;background:#0054e8;"></div>
<div style="left:754px;top:132px;width:1px;height:434px;background:#001890;"></div>
<div style="left:133px;top:132px;width:1px;height:431px;background:#0054e8;"></div>
<div style="left:133px;top:562px;width:619px;height:1px;background:#0050e8;"></div>
<div style="left:132px;top:563px;width:621px;height:1px;background:#0050e8;"></div>
<div style="left:131px;top:564px;width:623px;height:1px;background:#0040d0;"></div>
<div style="left:130px;top:565px;width:625px;height:1px;background:#001890;"></div>
<div style="left:130px;top:124px;width:625px;height:24px;background:linear-gradient(to bottom,#0a50d8 0,#2d78f0 1px,#2d78f0 3px,#0c5ae2 4px,#0450dc 5px,#0450dc 13px,#0660ee 15px,#0660ee 21px,#0448d0 23px);border-radius:6px 6px 0 0;"></div>
<div style="left:134px;top:147px;width:617px;height:415px;background:#c0c0c0;border:1px solid #f4f2e8;border-right:2px solid #fbfaf4;border-bottom:2px solid #fbfaf4;border-left:2px solid #f0ede0;"></div>
<div style="left:136px;top:130px;width:16px;height:14px;background:#c0c0c0;border:1px solid #fff;border-right-color:#404040;border-bottom-color:#404040;"></div>
<div style="left:138px;top:131px;width:12px;height:2px;background:#000080;"></div>
<div style="left:138px;top:136px;width:4px;height:1px;background:#000;"></div>
<div style="left:143px;top:135px;width:7px;height:4px;background:#fff;border:1px solid #000;"></div>
<div style="left:138px;top:140px;width:4px;height:1px;background:#000;"></div>
<div style="left:143px;top:139px;width:7px;height:4px;background:#fff;border:1px solid #000;"></div>
<span style="top:131px;font-size:11px;line-height:13px;font-weight:bold;color:#fff;left:156px;transform-origin:0 0;transform:scaleX(1.0164);text-shadow:1px 1px 0 #0a2a90;">Faktura vystavená - Fakturace Economia</span>
<div class="cb" style="left:735px;top:130px;width:14px;height:14px;background:linear-gradient(135deg,#e8765a,#d2401c 50%,#b8300e);"></div>
<svg style="left:738px;top:133px" width="8" height="8" viewBox="0 0 8 8"><path d="M1 1L7 7M7 1L1 7" stroke="#fff" stroke-width="2" stroke-linecap="square"/></svg>
<div class="panel" style="left:142px;top:153px;width:566px;height:53px;"></div>
<div style="left:147px;top:158px;width:10px;height:14px;background:#ece9d8;border:1px solid #fff;border-right-color:#d8d4c4;border-bottom-color:#d8d4c4;"></div>
<div style="left:149px;top:160px;width:5px;height:9px;background:#0000ff;border-top:1px solid #606060;border-left:1px solid #606060;"></div>
<div style="left:160px;top:158px;width:10px;height:14px;background:#ece9d8;border:1px solid #fff;border-right-color:#d8d4c4;border-bottom-color:#d8d4c4;"></div>
<div style="left:162px;top:160px;width:6px;height:9px;background:#c0c0c0;border-top:1px solid #606060;border-left:1px solid #606060;"></div>
<div style="left:173px;top:158px;width:10px;height:14px;background:#ece9d8;border:1px solid #fff;border-right-color:#d8d4c4;border-bottom-color:#d8d4c4;"></div>
<div style="left:175px;top:160px;width:6px;height:9px;background:#c0c0c0;border-top:1px solid #606060;border-left:1px solid #606060;"></div>
<div style="left:186px;top:158px;width:10px;height:14px;background:#ece9d8;border:1px solid #fff;border-right-color:#d8d4c4;border-bottom-color:#d8d4c4;"></div>
<div style="left:188px;top:160px;width:6px;height:9px;background:#c0c0c0;border-top:1px solid #606060;border-left:1px solid #606060;"></div>
<div style="left:199px;top:158px;width:10px;height:14px;background:#ece9d8;border:1px solid #fff;border-right-color:#d8d4c4;border-bottom-color:#d8d4c4;"></div>
<div style="left:201px;top:160px;width:6px;height:9px;background:#c0c0c0;border-top:1px solid #606060;border-left:1px solid #606060;"></div>
<div style="left:212px;top:158px;width:10px;height:14px;background:#ece9d8;border:1px solid #fff;border-right-color:#d8d4c4;border-bottom-color:#d8d4c4;"></div>
<div style="left:214px;top:160px;width:6px;height:9px;background:#c0c0c0;border-top:1px solid #606060;border-left:1px solid #606060;"></div>
<div style="left:225px;top:158px;width:10px;height:14px;background:#ece9d8;border:1px solid #fff;border-right-color:#d8d4c4;border-bottom-color:#d8d4c4;"></div>
<div style="left:227px;top:160px;width:6px;height:9px;background:#c0c0c0;border-top:1px solid #606060;border-left:1px solid #606060;"></div>
<div class="gbtn" style="left:147px;top:176px;width:25px;height:25px;"></div>
<svg style="left:151px;top:180px" width="19" height="18" viewBox="0 0 18 18" preserveAspectRatio="none"><path d="M1 1H14L17 4V17H1Z" fill="#008080" stroke="#000"/><rect x="4" y="1" width="9" height="5" fill="#c0c0c0" stroke="#000" stroke-width="0.6"/><rect x="10" y="2" width="2" height="3" fill="#000"/><rect x="3" y="9" width="12" height="8" fill="#fff" stroke="#000" stroke-width="0.6"/><path d="M5 11.500H13M5 13.500H13M5 15.500H13" stroke="#808080" stroke-width="0.8"/></svg>
<div class="pbtn" style="left:174px;top:176px;width:25px;height:25px;"></div>
<div style="left:179px;top:179px;width:9px;height:18px;border-top:1px solid #aca899;border-left:1px solid #aca899;"></div>
<div style="left:181px;top:186px;width:14px;height:12px;border-right:1px solid #fff;border-bottom:1px solid #fff;"></div>
<div class="gbtn" style="left:202px;top:176px;width:60px;height:25px;"></div>
<div style="left:207px;top:181px;width:51px;height:18px;border:1px dotted #403800;outline:0;background:none;box-shadow:inset 0 0 0 0 #000;"></div>
<div style="left:207px;top:181px;width:51px;height:18px;border:1px dashed #e8e000;border-width:1px;"></div>
<span style="top:183px;font-size:14px;line-height:15px;font-weight:bold;color:#0000ff;left:210px;transform-origin:0 0;transform:scaleX(0.8078);">Procesy</span>
<div style="left:280px;top:158px;width:93px;height:16px;background:#c0c0c0;"></div>
<span style="top:159px;font-size:12px;line-height:13px;left:297px;transform-origin:0 0;transform:scaleX(0.8993);">7432501458</span>
<span style="top:160px;font-size:12px;line-height:13px;left:390px;transform-origin:0 0;transform:scaleX(0.9000);">Pozn:</span>
<div style="left:419px;top:158px;width:242px;height:16px;background:#fff;"></div>
<div style="left:674px;top:158px;width:24px;height:16px;background:#c0c0c0;"></div>
<span style="top:159px;font-size:12px;line-height:13px;left:676px;transform-origin:0 0;transform:scaleX(0.8750);">CZK</span>
<div style="left:280px;top:180px;width:418px;height:16px;background:#c0c0c0;"></div>
<span style="top:181px;font-size:12px;line-height:13px;left:430px;transform-origin:0 0;transform:scaleX(0.9000);">Faktura za expedici tisku</span>
<div class="panel" style="left:142px;top:207px;width:270px;height:44px;"></div>
<span style="top:212px;font-size:12px;line-height:13px;right:612px;transform-origin:100% 0;transform:scaleX(0.9000);">Plátce</span>
<span style="top:230px;font-size:12px;line-height:13px;right:612px;transform-origin:100% 0;transform:scaleX(0.9000);">Příjemce</span>
<div style="left:193px;top:211px;width:36px;height:16px;background:#c0c0c0;"></div>
<span style="top:212px;font-size:12px;line-height:13px;right:572px;transform-origin:100% 0;transform:scaleX(0.9000);">1014</span>
<div style="left:193px;top:229px;width:36px;height:16px;background:#c0c0c0;"></div>
<span style="top:230px;font-size:12px;line-height:13px;right:572px;transform-origin:100% 0;transform:scaleX(0.9000);">1</span>
<div style="left:232px;top:211px;width:159px;height:16px;background:#c0c0c0;"></div>
<div style="left:232px;top:229px;width:159px;height:16px;background:#c0c0c0;"></div>
<div style="left:229px;top:211px;width:3px;height:34px;background:#40a8a8;"></div>
<div style="left:232px;top:226px;width:159px;height:2px;background:#50b0b0;"></div>
<div style="left:233px;top:213px;width:3px;height:3px;background:rgb(120,120,120);"></div>
<div style="left:233px;top:216px;width:3px;height:3px;background:rgb(144,144,144);"></div>
<div style="left:233px;top:219px;width:3px;height:3px;background:rgb(144,144,144);"></div>
<div style="left:233px;top:215px;width:1px;height:1px;background:#1020c0;"></div>
<div style="left:236px;top:213px;width:4px;height:3px;background:rgb(120,120,120);"></div>
<div style="left:236px;top:216px;width:4px;height:3px;background:rgb(152,152,152);"></div>
<div style="left:236px;top:219px;width:4px;height:3px;background:rgb(168,168,168);"></div>
<div style="left:240px;top:213px;width:3px;height:3px;background:rgb(120,120,120);"></div>
<div style="left:240px;top:219px;width:3px;height:3px;background:rgb(152,152,152);"></div>
<div style="left:240px;top:215px;width:1px;height:1px;background:#1020c0;"></div>
<div style="left:246px;top:213px;width:2px;height:3px;background:rgb(112,112,112);"></div>
<div style="left:246px;top:219px;width:2px;height:3px;background:rgb(144,144,144);"></div>
<div style="left:248px;top:213px;width:4px;height:3px;background:rgb(168,168,168);"></div>
<div style="left:248px;top:216px;width:4px;height:3px;background:rgb(120,120,120);"></div>
<div style="left:248px;top:215px;width:1px;height:1px;background:#1020c0;"></div>
<div style="left:252px;top:216px;width:3px;height:3px;background:rgb(152,152,152);"></div>
<div style="left:255px;top:213px;width:3px;height:3px;background:rgb(136,136,136);"></div>
<div style="left:255px;top:216px;width:3px;height:3px;background:rgb(128,128,128);"></div>
<div style="left:255px;top:219px;width:3px;height:3px;background:rgb(112,112,112);"></div>
<div style="left:258px;top:213px;width:3px;height:3px;background:rgb(128,128,128);"></div>
<div style="left:261px;top:213px;width:3px;height:3px;background:rgb(144,144,144);"></div>
<div style="left:261px;top:216px;width:3px;height:3px;background:rgb(112,112,112);"></div>
<div style="left:261px;top:219px;width:3px;height:3px;background:rgb(168,168,168);"></div>
<div style="left:264px;top:216px;width:3px;height:3px;background:rgb(120,120,120);"></div>
<div style="left:264px;top:219px;width:3px;height:3px;background:rgb(136,136,136);"></div>
<div style="left:267px;top:213px;width:2px;height:3px;background:rgb(168,168,168);"></div>
<div style="left:267px;top:216px;width:2px;height:3px;background:rgb(152,152,152);"></div>
<div style="left:267px;top:219px;width:2px;height:3px;background:rgb(144,144,144);"></div>
<div style="left:269px;top:216px;width:3px;height:3px;background:rgb(112,112,112);"></div>
<div style="left:269px;top:219px;width:3px;height:3px;background:rgb(144,144,144);"></div>
<div style="left:269px;top:215px;width:1px;height:1px;background:#1020c0;"></div>
<div style="left:272px;top:213px;width:3px;height:3px;background:rgb(120,120,120);"></div>
<div style="left:272px;top:216px;width:3px;height:3px;background:rgb(168,168,168);"></div>
<div style="left:272px;top:219px;width:3px;height:3px;background:rgb(128,128,128);"></div>
<div style="left:275px;top:213px;width:4px;height:3px;background:rgb(168,168,168);"></div>
<div style="left:275px;top:216px;width:4px;height:3px;background:rgb(152,152,152);"></div>
<div style="left:282px;top:213px;width:3px;height:3px;background:rgb(152,152,152);"></div>
<div style="left:282px;top:216px;width:3px;height:3px;background:rgb(128,128,128);"></div>
<div style="left:282px;top:219px;width:3px;height:3px;background:rgb(128,128,128);"></div>
<div style="left:285px;top:219px;width:2px;height:3px;background:rgb(136,136,136);"></div>
<div style="left:287px;top:213px;width:2px;height:3px;background:rgb(128,128,128);"></div>
<div style="left:287px;top:216px;width:2px;height:3px;background:rgb(152,152,152);"></div>
<div style="left:289px;top:213px;width:4px;height:3px;background:rgb(112,112,112);"></div>
<div style="left:289px;top:219px;width:4px;height:3px;background:rgb(128,128,128);"></div>
<div style="left:293px;top:213px;width:3px;height:3px;background:rgb(120,120,120);"></div>
<div style="left:293px;top:216px;width:3px;height:3px;background:rgb(128,128,128);"></div>
<div style="left:296px;top:213px;width:2px;height:3px;background:rgb(112,112,112);"></div>
<div style="left:296px;top:219px;width:2px;height:3px;background:rgb(120,120,120);"></div>
<div style="left:298px;top:213px;width:3px;height:3px;background:rgb(120,120,120);"></div>
<div style="left:298px;top:216px;width:3px;height:3px;background:rgb(152,152,152);"></div>
<div style="left:298px;top:219px;width:3px;height:3px;background:rgb(112,112,112);"></div>
<div style="left:301px;top:213px;width:3px;height:3px;background:rgb(168,168,168);"></div>
<div style="left:301px;top:219px;width:3px;height:3px;background:rgb(152,152,152);"></div>
<div style="left:304px;top:213px;width:4px;height:3px;background:rgb(168,168,168);"></div>
<div style="left:304px;top:216px;width:4px;height:3px;background:rgb(144,144,144);"></div>
<div style="left:308px;top:216px;width:3px;height:3px;background:rgb(168,168,168);"></div>
<div style="left:308px;top:219px;width:3px;height:3px;background:rgb(168,168,168);"></div>
<div style="left:311px;top:213px;width:4px;height:3px;background:rgb(168,168,168);"></div>
<div style="left:311px;top:219px;width:4px;height:3px;background:rgb(152,152,152);"></div>
<div style="left:315px;top:213px;width:4px;height:3px;background:rgb(136,136,136);"></div>
<div style="left:315px;top:216px;width:4px;height:3px;background:rgb(112,112,112);"></div>
<div style="left:315px;top:219px;width:4px;height:3px;background:rgb(168,168,168);"></div>
<div style="left:319px;top:213px;width:4px;height:3px;background:rgb(152,152,152);"></div>
<div style="left:319px;top:216px;width:4px;height:3px;background:rgb(152,152,152);"></div>
<div style="left:319px;top:219px;width:4px;height:3px;background:rgb(168,168,168);"></div>
<div style="left:323px;top:213px;width:3px;height:3px;background:rgb(120,120,120);"></div>
<div style="left:327px;top:213px;width:2px;height:3px;background:rgb(168,168,168);"></div>
<div style="left:327px;top:216px;width:2px;height:3px;background:rgb(120,120,120);"></div>
<div style="left:329px;top:213px;width:2px;height:3px;background:rgb(112,112,112);"></div>
<div style="left:329px;top:216px;width:2px;height:3px;background:rgb(128,128,128);"></div>
<div style="left:329px;top:219px;width:2px;height:3px;background:rgb(112,112,112);"></div>
<div style="left:331px;top:213px;width:2px;height:3px;background:rgb(128,128,128);"></div>
<div style="left:331px;top:219px;width:2px;height:3px;background:rgb(168,168,168);"></div>
<div style="left:333px;top:213px;width:3px;height:3px;background:rgb(168,168,168);"></div>
<div style="left:333px;top:216px;width:3px;height:3px;background:rgb(120,120,120);"></div>
<div style="left:336px;top:213px;width:2px;height:3px;background:rgb(144,144,144);"></div>
<div style="left:336px;top:219px;width:2px;height:3px;background:rgb(128,128,128);"></div>
<div style="left:338px;top:213px;width:4px;height:3px;background:rgb(128,128,128);"></div>
<div style="left:338px;top:216px;width:4px;height:3px;background:rgb(112,112,112);"></div>
<div style="left:343px;top:213px;width:2px;height:3px;background:rgb(112,112,112);"></div>
<div style="left:343px;top:219px;width:2px;height:3px;background:rgb(144,144,144);"></div>
<div style="left:346px;top:213px;width:3px;height:3px;background:rgb(136,136,136);"></div>
<div style="left:346px;top:216px;width:3px;height:3px;background:rgb(128,128,128);"></div>
<div style="left:346px;top:219px;width:3px;height:3px;background:rgb(128,128,128);"></div>
<div style="left:350px;top:216px;width:4px;height:3px;background:rgb(112,112,112);"></div>
<div style="left:350px;top:219px;width:4px;height:3px;background:rgb(144,144,144);"></div>
<div style="left:354px;top:213px;width:2px;height:3px;background:rgb(136,136,136);"></div>
<div style="left:354px;top:216px;width:2px;height:3px;background:rgb(152,152,152);"></div>
<div style="left:354px;top:219px;width:2px;height:3px;background:rgb(152,152,152);"></div>
<div style="left:356px;top:213px;width:4px;height:3px;background:rgb(120,120,120);"></div>
<div style="left:356px;top:216px;width:4px;height:3px;background:rgb(128,128,128);"></div>
<div style="left:356px;top:219px;width:4px;height:3px;background:rgb(112,112,112);"></div>
<div style="left:360px;top:219px;width:3px;height:3px;background:rgb(144,144,144);"></div>
<div style="left:363px;top:213px;width:4px;height:3px;background:rgb(168,168,168);"></div>
<div style="left:363px;top:216px;width:4px;height:3px;background:rgb(168,168,168);"></div>
<div style="left:367px;top:213px;width:3px;height:3px;background:rgb(112,112,112);"></div>
<div style="left:367px;top:219px;width:3px;height:3px;background:rgb(136,136,136);"></div>
<div style="left:370px;top:213px;width:2px;height:3px;background:rgb(144,144,144);"></div>
<div style="left:370px;top:216px;width:2px;height:3px;background:rgb(136,136,136);"></div>
<div style="left:370px;top:219px;width:2px;height:3px;background:rgb(112,112,112);"></div>
<div style="left:372px;top:216px;width:2px;height:3px;background:rgb(168,168,168);"></div>
<div style="left:372px;top:219px;width:2px;height:3px;background:rgb(128,128,128);"></div>
<div style="left:374px;top:216px;width:2px;height:3px;background:rgb(144,144,144);"></div>
<div style="left:374px;top:219px;width:2px;height:3px;background:rgb(112,112,112);"></div>
<div style="left:379px;top:213px;width:2px;height:3px;background:rgb(168,168,168);"></div>
<div style="left:379px;top:216px;width:2px;height:3px;background:rgb(168,168,168);"></div>
<div style="left:379px;top:219px;width:2px;height:3px;background:rgb(120,120,120);"></div>
<div style="left:381px;top:213px;width:4px;height:3px;background:rgb(144,144,144);"></div>
<div style="left:381px;top:216px;width:4px;height:3px;background:rgb(128,128,128);"></div>
<div style="left:381px;top:219px;width:4px;height:3px;background:rgb(112,112,112);"></div>
<div style="left:385px;top:219px;width:4px;height:3px;background:rgb(144,144,144);"></div>
<div style="left:389px;top:213px;width:4px;height:3px;background:rgb(136,136,136);"></div>
<div style="left:389px;top:219px;width:4px;height:3px;background:rgb(112,112,112);"></div>
<div style="left:233px;top:231px;width:4px;height:3px;background:rgb(168,168,168);"></div>
<div style="left:233px;top:234px;width:4px;height:3px;background:rgb(128,128,128);"></div>
<div style="left:233px;top:237px;width:4px;height:3px;background:rgb(120,120,120);"></div>
<div style="left:237px;top:234px;width:3px;height:3px;background:rgb(168,168,168);"></div>
<div style="left:237px;top:237px;width:3px;height:3px;background:rgb(152,152,152);"></div>
<div style="left:240px;top:234px;width:3px;height:3px;background:rgb(128,128,128);"></div>
<div style="left:240px;top:237px;width:3px;height:3px;background:rgb(136,136,136);"></div>
<div style="left:243px;top:231px;width:3px;height:3px;background:rgb(168,168,168);"></div>
<div style="left:243px;top:237px;width:3px;height:3px;background:rgb(152,152,152);"></div>
<div style="left:246px;top:231px;width:4px;height:3px;background:rgb(168,168,168);"></div>
<div style="left:246px;top:234px;width:4px;height:3px;background:rgb(112,112,112);"></div>
<div style="left:246px;top:237px;width:4px;height:3px;background:rgb(152,152,152);"></div>
<div style="left:246px;top:236px;width:1px;height:1px;background:#1020c0;"></div>
<div style="left:250px;top:231px;width:2px;height:3px;background:rgb(120,120,120);"></div>
<div style="left:250px;top:237px;width:2px;height:3px;background:rgb(168,168,168);"></div>
<div style="left:252px;top:231px;width:3px;height:3px;background:rgb(120,120,120);"></div>
<div style="left:252px;top:234px;width:3px;height:3px;background:rgb(120,120,120);"></div>
<div style="left:252px;top:237px;width:3px;height:3px;background:rgb(152,152,152);"></div>
<div style="left:257px;top:234px;width:3px;height:3px;background:rgb(136,136,136);"></div>
<div style="left:257px;top:237px;width:3px;height:3px;background:rgb(168,168,168);"></div>
<div style="left:257px;top:233px;width:1px;height:1px;background:#1020c0;"></div>
<div style="left:260px;top:231px;width:3px;height:3px;background:rgb(136,136,136);"></div>
<div style="left:260px;top:234px;width:3px;height:3px;background:rgb(152,152,152);"></div>
<div style="left:260px;top:237px;width:3px;height:3px;background:rgb(112,112,112);"></div>
<div style="left:263px;top:231px;width:4px;height:3px;background:rgb(152,152,152);"></div>
<div style="left:263px;top:234px;width:4px;height:3px;background:rgb(136,136,136);"></div>
<div style="left:263px;top:237px;width:4px;height:3px;background:rgb(144,144,144);"></div>
<div style="left:267px;top:231px;width:2px;height:3px;background:rgb(112,112,112);"></div>
<div style="left:267px;top:234px;width:2px;height:3px;background:rgb(144,144,144);"></div>
<div style="left:267px;top:238px;width:1px;height:1px;background:#1020c0;"></div>
<div style="left:269px;top:231px;width:3px;height:3px;background:rgb(128,128,128);"></div>
<div style="left:269px;top:234px;width:3px;height:3px;background:rgb(152,152,152);"></div>
<div style="left:269px;top:237px;width:3px;height:3px;background:rgb(168,168,168);"></div>
<div style="left:274px;top:231px;width:2px;height:3px;background:rgb(144,144,144);"></div>
<div style="left:274px;top:234px;width:2px;height:3px;background:rgb(152,152,152);"></div>
<div style="left:274px;top:237px;width:2px;height:3px;background:rgb(152,152,152);"></div>
<div style="left:276px;top:231px;width:3px;height:3px;background:rgb(152,152,152);"></div>
<div style="left:276px;top:234px;width:3px;height:3px;background:rgb(112,112,112);"></div>
<div style="left:279px;top:231px;width:4px;height:3px;background:rgb(152,152,152);"></div>
<div style="left:279px;top:234px;width:4px;height:3px;background:rgb(136,136,136);"></div>
<div style="left:279px;top:237px;width:4px;height:3px;background:rgb(120,120,120);"></div>
<div style="left:284px;top:231px;width:4px;height:3px;background:rgb(128,128,128);"></div>
<div style="left:284px;top:234px;width:4px;height:3px;background:rgb(112,112,112);"></div>
<div style="left:284px;top:238px;width:1px;height:1px;background:#1020c0;"></div>
<div style="left:288px;top:237px;width:3px;height:3px;background:rgb(168,168,168);"></div>
<div style="left:291px;top:231px;width:2px;height:3px;background:rgb(144,144,144);"></div>
<div style="left:291px;top:234px;width:2px;height:3px;background:rgb(112,112,112);"></div>
<div style="left:291px;top:237px;width:2px;height:3px;background:rgb(152,152,152);"></div>
<div style="left:291px;top:238px;width:1px;height:1px;background:#1020c0;"></div>
<div style="left:293px;top:231px;width:4px;height:3px;background:rgb(136,136,136);"></div>
<div style="left:293px;top:237px;width:4px;height:3px;background:rgb(144,144,144);"></div>
<div style="left:297px;top:231px;width:3px;height:3px;background:rgb(120,120,120);"></div>
<div style="left:297px;top:234px;width:3px;height:3px;background:rgb(120,120,120);"></div>
<div style="left:300px;top:237px;width:4px;height:3px;background:rgb(144,144,144);"></div>
<div style="left:304px;top:234px;width:4px;height:3px;background:rgb(128,128,128);"></div>
<div class="panel" style="left:414px;top:207px;width:294px;height:90px;"></div>
<span style="top:212px;font-size:12px;line-height:13px;right:322px;transform-origin:100% 0;transform:scaleX(0.9000);">Var.symb.</span>
<span style="top:228px;font-size:12px;line-height:13px;right:322px;transform-origin:100% 0;transform:scaleX(0.9000);">Konst.symb.</span>
<span style="top:244px;font-size:12px;line-height:13px;right:322px;transform-origin:100% 0;transform:scaleX(0.9000);">Spec.symb.</span>
<span style="top:260px;font-size:12px;line-height:13px;right:322px;transform-origin:100% 0;transform:scaleX(0.9000);">Plat.skup.</span>
<span style="top:276px;font-size:12px;line-height:13px;right:322px;transform-origin:100% 0;transform:scaleX(0.9000);">Tisk.sestava</span>
<div style="left:486px;top:211px;width:74px;height:80px;background:#c0c0c0;"></div>
<span style="top:212px;font-size:12px;line-height:13px;right:240px;transform-origin:100% 0;transform:scaleX(0.9000);">7432501458</span>
<span style="top:276px;font-size:12px;line-height:13px;right:240px;transform-origin:100% 0;transform:scaleX(0.9000);">108</span>
<span style="top:212px;font-size:12px;line-height:13px;right:177px;transform-origin:100% 0;transform:scaleX(0.9000);">Ext.č.dokl.</span>
<span style="top:228px;font-size:12px;line-height:13px;right:177px;transform-origin:100% 0;transform:scaleX(0.9000);">Vystaveno</span>
<span style="top:244px;font-size:12px;line-height:13px;right:177px;transform-origin:100% 0;transform:scaleX(0.9000);">Zdan.plnění</span>
<span style="top:260px;font-size:12px;line-height:13px;right:177px;transform-origin:100% 0;transform:scaleX(0.9000);">Splatno</span>
<div style="left:631px;top:211px;width:75px;height:16px;background:#c0c0c0;"></div>
<div style="left:631px;top:227px;width:75px;height:48px;background:#fff;"></div>
<span style="top:228px;font-size:12px;line-height:13px;right:95px;transform-origin:100% 0;transform:scaleX(0.9000);">25.05.2005</span>
<span style="top:244px;font-size:12px;line-height:13px;right:95px;transform-origin:100% 0;transform:scaleX(0.9000);">24.08.2005</span>
<span style="top:260px;font-size:12px;line-height:13px;right:95px;transform-origin:100% 0;transform:scaleX(0.9000);">24.06.2005</span>
<div class="panel" style="left:142px;top:269px;width:62px;height:31px;"></div>
<div class="pbtn" style="left:148px;top:273px;width:25px;height:25px;"></div>
<div class="pbtn" style="left:174px;top:273px;width:25px;height:25px;"></div>
<div style="left:153px;top:276px;width:9px;height:18px;border-top:1px solid #aca899;border-left:1px solid #aca899;"></div>
<div style="left:155px;top:283px;width:14px;height:12px;border-right:1px solid #fff;border-bottom:1px solid #fff;"></div>
<svg style="left:177px;top:275px" width="19" height="19" viewBox="0 0 19 19"><path d="M5.500 1.500H16M5.500 1.500V7L2.500 11V14" stroke="#aca899" fill="none"/><path d="M16.500 1.500V3M3.500 15.500H4.500M7.500 6.500H8.500" stroke="#fff"/><path d="M7 4.500H11M10 8.500H15M8 10.500H15M8 12.500H15M7 14.500H15" stroke="#aca899"/><path d="M8 9.500H15M8 11.500H15M7 13.500H15" stroke="#fff"/></svg>
<div class="panel" style="left:142px;top:301px;width:566px;height:137px;"></div>
<div style="left:148px;top:306px;width:552px;height:126px;background:#fff;border:1px solid #808080;border-right-color:#fff;border-bottom-color:#fff;"></div>
<div style="left:149px;top:307px;width:550px;height:124px;border:1px solid #404040;border-right-color:#ece9d8;border-bottom-color:#ece9d8;"></div>
<div class="hd" style="left:150px;top:308px;width:21px;height:19px;"></div>
<div class="hd" style="left:171px;top:308px;width:25px;height:19px;"></div>
<span style="top:311px;font-size:12px;line-height:13px;left:174px;transform-origin:0 0;transform:scaleX(0.9000);">Pol.</span>
<div class="hd" style="left:196px;top:308px;width:36px;height:19px;"></div>
<span style="top:311px;font-size:12px;line-height:13px;left:205px;transform-origin:0 0;transform:scaleX(0.9000);">K.č.</span>
<div class="hd" style="left:232px;top:308px;width:55px;height:19px;"></div>
<span style="top:311px;font-size:12px;line-height:13px;left:243px;transform-origin:0 0;transform:scaleX(0.9000);">Vydání</span>
<div class="hd" style="left:287px;top:308px;width:61px;height:19px;"></div>
<span style="top:311px;font-size:12px;line-height:13px;left:302px;transform-origin:0 0;transform:scaleX(0.9000);">Název</span>
<div class="hd" style="left:348px;top:308px;width:46px;height:19px;"></div>
<span style="top:311px;font-size:12px;line-height:13px;left:349px;transform-origin:0 0;transform:scaleX(0.9000);">Typ DPH</span>
<div class="hd" style="left:394px;top:308px;width:65px;height:19px;"></div>
<span style="top:311px;font-size:12px;line-height:13px;left:398px;transform-origin:0 0;transform:scaleX(0.9000);">Sazba DPH</span>
<div class="hd" style="left:459px;top:308px;width:48px;height:19px;"></div>
<span style="top:311px;font-size:12px;line-height:13px;left:462px;transform-origin:0 0;transform:scaleX(0.9000);">Pol.DPH</span>
<div class="hd" style="left:507px;top:308px;width:49px;height:19px;"></div>
<span style="top:311px;font-size:12px;line-height:13px;left:510px;transform-origin:0 0;transform:scaleX(0.9000);">Typ ceny</span>
<div class="hd" style="left:556px;top:308px;width:52px;height:19px;"></div>
<span style="top:311px;font-size:12px;line-height:13px;left:565px;transform-origin:0 0;transform:scaleX(0.9000);">Cena j.</span>
<div class="hd" style="left:608px;top:308px;width:49px;height:19px;"></div>
<span style="top:311px;font-size:12px;line-height:13px;left:611px;transform-origin:0 0;transform:scaleX(0.9000);">Množství</span>
<div class="hd" style="left:657px;top:308px;width:34px;height:19px;"></div>
<span style="top:311px;font-size:12px;line-height:13px;left:660px;transform-origin:0 0;transform:scaleX(0.9000);">Sleva</span>
<div class="hd" style="left:691px;top:308px;width:8px;height:19px;"></div>
<div style="left:694px;top:312px;width:3px;height:9px;border:1px solid #000;border-right:none;border-radius:2px 0 0 2px;"></div>
<div class="hd" style="left:150px;top:327px;width:21px;height:18px;"></div>
<div class="hd" style="left:150px;top:345px;width:21px;height:18px;"></div>
<div class="hd" style="left:150px;top:363px;width:21px;height:18px;"></div>
<div class="hd" style="left:150px;top:381px;width:21px;height:18px;"></div>
<div class="hd" style="left:150px;top:399px;width:21px;height:18px;"></div>
<div style="left:150px;top:327px;width:21px;height:17px;background-color:#2030c8;background-image:linear-gradient(to right,transparent 1px,#000 1px),linear-gradient(to bottom,transparent 1px,#000 1px);background-size:2px 2px,2px 2px;"></div>
<div style="left:171px;top:327px;width:529px;height:17px;background:#000;"></div>
<span style="top:330px;font-size:12px;line-height:13px;color:#fff;right:608px;transform-origin:100% 0;transform:scaleX(0.9000);">1</span>
<span style="top:330px;font-size:12px;line-height:13px;color:#fff;right:572px;transform-origin:100% 0;transform:scaleX(0.9000);">4</span>
<span style="top:330px;font-size:12px;line-height:13px;color:#fff;left:235px;transform-origin:0 0;transform:scaleX(0.9000);">20050034</span>
<span style="top:330px;font-size:12px;line-height:13px;color:#fff;left:290px;transform-origin:0 0;transform:scaleX(0.9000);">EK</span>
<span style="top:330px;font-size:12px;line-height:13px;color:#fff;left:351px;transform-origin:0 0;transform:scaleX(0.9000);">2</span>
<span style="top:330px;font-size:12px;line-height:13px;color:#fff;right:344px;transform-origin:100% 0;transform:scaleX(0.9000);">5,00</span>
<span style="top:330px;font-size:12px;line-height:13px;color:#fff;left:462px;transform-origin:0 0;transform:scaleX(0.9000);">0</span>
<span style="top:330px;font-size:12px;line-height:13px;color:#fff;left:510px;transform-origin:0 0;transform:scaleX(0.9000);">B</span>
<span style="top:330px;font-size:12px;line-height:13px;color:#fff;right:195px;transform-origin:100% 0;transform:scaleX(0.9000);">20,83</span>
<span style="top:330px;font-size:12px;line-height:13px;color:#fff;right:146px;transform-origin:100% 0;transform:scaleX(0.9000);">880</span>
<span style="top:330px;font-size:12px;line-height:13px;color:#fff;right:112px;transform-origin:100% 0;transform:scaleX(0.9000);">0,04</span>
<div style="left:171px;top:344px;width:528px;height:1px;background-image:linear-gradient(to right,#fff 1px,transparent 1px);background-size:2px 1px;"></div>
<div style="left:171px;top:362px;width:528px;height:1px;background-image:linear-gradient(to right,#000 1px,transparent 1px);background-size:2px 1px;"></div>
<div style="left:171px;top:380px;width:528px;height:1px;background-image:linear-gradient(to right,#000 1px,transparent 1px);background-size:2px 1px;"></div>
<div style="left:171px;top:398px;width:528px;height:1px;background-image:linear-gradient(to right,#000 1px,transparent 1px);background-size:2px 1px;"></div>
<div style="left:195px;top:327px;width:1px;height:87px;background-image:linear-gradient(to bottom,#000 1px,transparent 1px);background-size:1px 2px;"></div>
<div style="left:195px;top:327px;width:1px;height:17px;background-image:linear-gradient(to bottom,#fff 1px,#000 1px);background-size:1px 2px;"></div>
<div style="left:231px;top:327px;width:1px;height:87px;background-image:linear-gradient(to bottom,#000 1px,transparent 1px);background-size:1px 2px;"></div>
<div style="left:231px;top:327px;width:1px;height:17px;background-image:linear-gradient(to bottom,#fff 1px,#000 1px);background-size:1px 2px;"></div>
<div style="left:286px;top:327px;width:1px;height:87px;background-image:linear-gradient(to bottom,#000 1px,transparent 1px);background-size:1px 2px;"></div>
<div style="left:286px;top:327px;width:1px;height:17px;background-image:linear-gradient(to bottom,#fff 1px,#000 1px);background-size:1px 2px;"></div>
<div style="left:347px;top:327px;width:1px;height:87px;background-image:linear-gradient(to bottom,#000 1px,transparent 1px);background-size:1px 2px;"></div>
<div style="left:347px;top:327px;width:1px;height:17px;background-image:linear-gradient(to bottom,#fff 1px,#000 1px);background-size:1px 2px;"></div>
<div style="left:393px;top:327px;width:1px;height:87px;background-image:linear-gradient(to bottom,#000 1px,transparent 1px);background-size:1px 2px;"></div>
<div style="left:393px;top:327px;width:1px;height:17px;background-image:linear-gradient(to bottom,#fff 1px,#000 1px);background-size:1px 2px;"></div>
<div style="left:458px;top:327px;width:1px;height:87px;background-image:linear-gradient(to bottom,#000 1px,transparent 1px);background-size:1px 2px;"></div>
<div style="left:458px;top:327px;width:1px;height:17px;background-image:linear-gradient(to bottom,#fff 1px,#000 1px);background-size:1px 2px;"></div>
<div style="left:506px;top:327px;width:1px;height:87px;background-image:linear-gradient(to bottom,#000 1px,transparent 1px);background-size:1px 2px;"></div>
<div style="left:506px;top:327px;width:1px;height:17px;background-image:linear-gradient(to bottom,#fff 1px,#000 1px);background-size:1px 2px;"></div>
<div style="left:555px;top:327px;width:1px;height:87px;background-image:linear-gradient(to bottom,#000 1px,transparent 1px);background-size:1px 2px;"></div>
<div style="left:555px;top:327px;width:1px;height:17px;background-image:linear-gradient(to bottom,#fff 1px,#000 1px);background-size:1px 2px;"></div>
<div style="left:607px;top:327px;width:1px;height:87px;background-image:linear-gradient(to bottom,#000 1px,transparent 1px);background-size:1px 2px;"></div>
<div style="left:607px;top:327px;width:1px;height:17px;background-image:linear-gradient(to bottom,#fff 1px,#000 1px);background-size:1px 2px;"></div>
<div style="left:656px;top:327px;width:1px;height:87px;background-image:linear-gradient(to bottom,#000 1px,transparent 1px);background-size:1px 2px;"></div>
<div style="left:656px;top:327px;width:1px;height:17px;background-image:linear-gradient(to bottom,#fff 1px,#000 1px);background-size:1px 2px;"></div>
<div style="left:690px;top:327px;width:1px;height:87px;background-image:linear-gradient(to bottom,#000 1px,transparent 1px);background-size:1px 2px;"></div>
<div style="left:690px;top:327px;width:1px;height:17px;background-image:linear-gradient(to bottom,#fff 1px,#000 1px);background-size:1px 2px;"></div>
<div style="left:150px;top:414px;width:549px;height:17px;background:linear-gradient(to bottom,#f3f1ec,#fefefb);"></div>
<div class="sb" style="left:152px;top:415px;width:15px;height:15px;"></div>
<svg style="left:152px;top:415px" width="15" height="15" viewBox="-7.5 -7.5 15 15"><path d="M2 -3.5L-1.5 0L2 3.5" stroke="#4d6185" stroke-width="2" fill="none"/></svg>
<div class="sb" style="left:168px;top:415px;width:17px;height:15px;"></div>
<div style="left:172px;top:419px;width:1px;height:7px;background:#eef4fe;"></div>
<div style="left:173px;top:420px;width:1px;height:7px;background:#8cb0f8;"></div>
<div style="left:174px;top:419px;width:1px;height:7px;background:#eef4fe;"></div>
<div style="left:175px;top:420px;width:1px;height:7px;background:#8cb0f8;"></div>
<div style="left:176px;top:419px;width:1px;height:7px;background:#eef4fe;"></div>
<div style="left:177px;top:420px;width:1px;height:7px;background:#8cb0f8;"></div>
<div style="left:178px;top:419px;width:1px;height:7px;background:#eef4fe;"></div>
<div style="left:179px;top:420px;width:1px;height:7px;background:#8cb0f8;"></div>
<div class="sb" style="left:683px;top:415px;width:15px;height:15px;"></div>
<svg style="left:683px;top:415px" width="15" height="15" viewBox="-7.5 -7.5 15 15"><path d="M-2 -3.5L1.5 0L-2 3.5" stroke="#4d6185" stroke-width="2" fill="none"/></svg>
<div class="panel" style="left:142px;top:440px;width:395px;height:86px;"></div>
<span style="top:445px;font-size:12px;line-height:13px;left:170px;transform-origin:0 0;transform:scaleX(0.9000);">Žádná</span>
<span style="top:445px;font-size:12px;line-height:13px;left:239px;transform-origin:0 0;transform:scaleX(0.9000);">Nulová</span>
<span style="top:445px;font-size:12px;line-height:13px;left:306px;transform-origin:0 0;transform:scaleX(0.9000);">Snížená</span>
<span style="top:445px;font-size:12px;line-height:13px;left:374px;transform-origin:0 0;transform:scaleX(0.9000);">Základní</span>
<span style="top:445px;font-size:12px;line-height:13px;left:442px;transform-origin:0 0;transform:scaleX(0.9000);">Celkem</span>
<div style="left:148px;top:458px;width:341px;height:16px;background:#c0c0c0;"></div>
<div style="left:284px;top:474px;width:205px;height:15px;background:#c0c0c0;"></div>
<div style="left:420px;top:489px;width:69px;height:30px;background:#c0c0c0;"></div>
<span style="top:458px;font-size:12px;line-height:13px;right:584px;transform-origin:100% 0;transform:scaleX(0.9000);">0,00</span>
<span style="top:458px;font-size:12px;line-height:13px;right:516px;transform-origin:100% 0;transform:scaleX(0.9000);">0,00</span>
<span style="top:458px;font-size:12px;line-height:13px;right:448px;transform-origin:100% 0;transform:scaleX(0.9000);">18333,30</span>
<span style="top:458px;font-size:12px;line-height:13px;right:380px;transform-origin:100% 0;transform:scaleX(0.9000);">0,00</span>
<span style="top:458px;font-size:12px;line-height:13px;right:311px;transform-origin:100% 0;transform:scaleX(0.9000);">18333,30</span>
<span style="top:473px;font-size:12px;line-height:13px;right:448px;transform-origin:100% 0;transform:scaleX(0.9000);">916,67</span>
<span style="top:473px;font-size:12px;line-height:13px;right:380px;transform-origin:100% 0;transform:scaleX(0.9000);">0,00</span>
<span style="top:473px;font-size:12px;line-height:13px;right:311px;transform-origin:100% 0;transform:scaleX(0.9000);">916,67</span>
<span style="top:488px;font-size:12px;line-height:13px;right:311px;transform-origin:100% 0;transform:scaleX(0.9000);">19249,97</span>
<span style="top:503px;font-size:12px;line-height:13px;right:311px;transform-origin:100% 0;transform:scaleX(0.9000);">19250,00</span>
<span style="top:460px;font-size:12px;line-height:13px;left:493px;transform-origin:0 0;transform:scaleX(0.9000);">Základ</span>
<span style="top:475px;font-size:12px;line-height:13px;left:493px;transform-origin:0 0;transform:scaleX(0.9000);">DPH</span>
<span style="top:490px;font-size:12px;line-height:13px;left:493px;transform-origin:0 0;transform:scaleX(0.9000);">Celkem</span>
<span style="top:505px;font-size:12px;line-height:13px;left:493px;transform-origin:0 0;transform:scaleX(0.9000);">Zaokr.</span>
<span style="top:489px;font-size:12px;line-height:13px;left:148px;transform-origin:0 0;transform:scaleX(0.9000);">Poštovné (s DPH)</span>
<div style="left:148px;top:503px;width:69px;height:16px;background:#c0c0c0;"></div>
<div class="gbtn" style="left:553px;top:442px;width:22px;height:24px;"></div>
<div style="left:556px;top:446px;width:5px;height:16px;background:#808080;"></div>
<div style="left:567px;top:446px;width:5px;height:16px;background:#808080;"></div>
<div style="left:561px;top:446px;width:6px;height:16px;background:#fff;"></div>
<span style="top:444px;font-size:21px;line-height:22px;font-family:'Liberation Serif',serif;font-weight:bold;color:#0000ff;left:561px;transform-origin:0 0;transform:scaleX(0.9354);">P</span>
<div class="panel" style="left:594px;top:440px;width:114px;height:86px;"></div>
<div style="left:635px;top:458px;width:69px;height:62px;background:#c0c0c0;"></div>
<span style="top:460px;font-size:12px;line-height:13px;right:167px;transform-origin:100% 0;transform:scaleX(0.9000);">Datum</span>
<span style="top:459px;font-size:12px;line-height:13px;right:97px;transform-origin:100% 0;transform:scaleX(0.9000);">25.05.2005</span>
<span style="top:475px;font-size:12px;line-height:13px;right:167px;transform-origin:100% 0;transform:scaleX(0.9000);">Kurz</span>
<span style="top:474px;font-size:12px;line-height:13px;right:97px;transform-origin:100% 0;transform:scaleX(0.9000);">0,0000</span>
<span style="top:490px;font-size:12px;line-height:13px;right:167px;transform-origin:100% 0;transform:scaleX(0.9000);">Jedn.</span>
<span style="top:489px;font-size:12px;line-height:13px;right:97px;transform-origin:100% 0;transform:scaleX(0.9000);">0</span>
<span style="top:506px;font-size:12px;line-height:13px;right:167px;transform-origin:100% 0;transform:scaleX(0.9000);">V CZK</span>
<span style="top:505px;font-size:12px;line-height:13px;right:97px;transform-origin:100% 0;transform:scaleX(0.9000);">19250,00</span>
</body></html>
